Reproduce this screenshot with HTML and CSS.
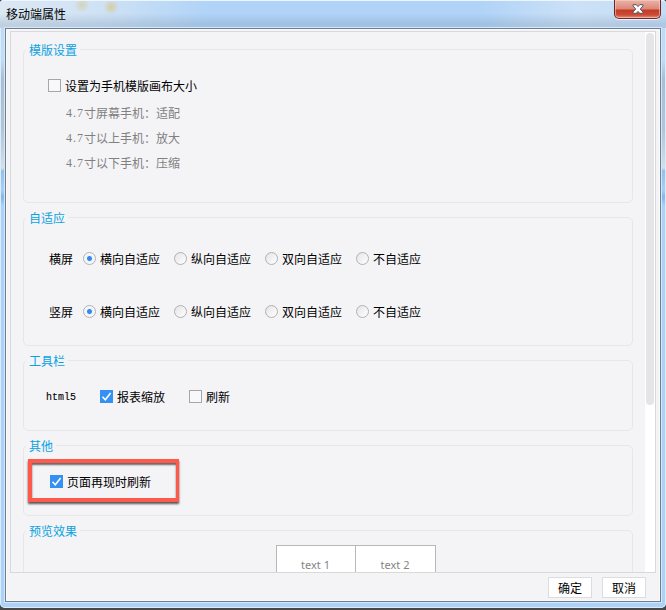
FILE: index.html
```html
<!DOCTYPE html>
<html lang="zh-CN">
<head>
<meta charset="utf-8">
<title>移动端属性</title>
<link rel="stylesheet" href="styles.css">
</head>
<body>
<div class="window">
  <header class="titlebar">
    <h1>移动端属性</h1>
    <button class="close" aria-label="关闭">
      <svg width="12" height="10" viewBox="0 0 12 10"><path d="M1 .7h3.3L6 2.6 7.7.7H11v1.2L8.3 5 11 8.1v1.2H7.7L6 7.4 4.300 9.300H1V8.100L3.700 5 1 1.900z" fill="#fff" stroke="#595465" stroke-width="1"/></svg>
    </button>
  </header>
  <main class="dialog">
    <div class="panel">
      <div class="content">
        <section class="group template">
          <h2>模版设置</h2>
          <label class="option"><i class="box"></i>设置为手机模版画布大小</label>
          <ul class="notes">
            <li><span>4.7</span>寸屏幕手机：适配</li>
            <li><span>4.7</span>寸以上手机：放大</li>
            <li><span>4.7</span>寸以下手机：压缩</li>
          </ul>
        </section>
        <section class="group adapt">
          <h2>自适应</h2>
          <div class="radios">
            <span class="name">横屏</span>
            <label><i class="radio on"></i>横向自适应</label>
            <label><i class="radio"></i>纵向自适应</label>
            <label><i class="radio"></i>双向自适应</label>
            <label><i class="radio"></i>不自适应</label>
          </div>
          <div class="radios">
            <span class="name">竖屏</span>
            <label><i class="radio on"></i>横向自适应</label>
            <label><i class="radio"></i>纵向自适应</label>
            <label><i class="radio"></i>双向自适应</label>
            <label><i class="radio"></i>不自适应</label>
          </div>
        </section>
        <section class="group tools">
          <h2>工具栏</h2>
          <div class="toolrow">
            <span class="html5">html5</span>
            <label class="option zoomable"><i class="box on"><svg width="13" height="13" viewBox="0 0 13 13"><path d="M2.500 6.800 5.300 9.700 10.600 2.900" fill="none" stroke="#fff" stroke-width="1.600"/></svg></i>报表缩放</label>
            <label class="option"><i class="box"></i>刷新</label>
          </div>
        </section>
        <section class="group other">
          <h2>其他</h2>
          <div class="highlight">
            <label class="option"><i class="box on"><svg width="13" height="13" viewBox="0 0 13 13"><path d="M2.500 6.800 5.300 9.700 10.600 2.900" fill="none" stroke="#fff" stroke-width="1.600"/></svg></i>页面再现时刷新</label>
          </div>
        </section>
        <section class="group preview">
          <h2>预览效果</h2>
          <div class="cells"><span>text 1</span><span>text 2</span></div>
        </section>
      </div>
      <div class="track"><div class="thumb"></div></div>
    </div>
    <footer>
      <button class="action">确定</button>
      <button class="action">取消</button>
    </footer>
  </main>
</div>
</body>
</html>
```
FILE: styles.css
```css
* { box-sizing: border-box; }
body {
  margin: 0;
  width: 666px;
  height: 610px;
  overflow: hidden;
  background: #484848;
  color: #000;
  font: 12px/16px "Noto Sans CJK SC", sans-serif;
}
h1, h2, ul { margin: 0; padding: 0; font-size: 12px; font-weight: 400; }
ul { list-style: none; }
i { font-style: normal; flex: none; }
button { font: inherit; padding: 0; }

.window {
  height: 608px;
  padding: 0 5px;
  border-radius: 4px 4px 5px 5px;
  background: linear-gradient(#bed9f1 0, #c1ddf8 60px, #a9bfd3 78px, #b3c5d5 130px, #d5dfe8 168px, #91c0ed 171px, #a8cff5 190px, #83b6e7 197px, #acd2f8 206px, #acd2f8 100%);
  box-shadow: inset 0 0 0 1px #d9ebfc;
}
.titlebar {
  display: flex;
  justify-content: space-between;
  height: 28px;
  margin: 0 -5px;
  padding: 0 5px 0 6px;
  border-top: 1px solid #edf6ff;
  border-radius: 4px 4px 0 0;
  background:
    radial-gradient(circle at 82px 4px, rgba(211, 200, 140, .6) 0, transparent 8px),
    radial-gradient(circle at 111px 6px, rgba(218, 198, 135, .75) 0, transparent 8px),
    linear-gradient(transparent 45%, rgba(120, 145, 170, .27) 85%),
    linear-gradient(90deg, #dce8f3 0, #cfe2f5 100px, #b0d3f7 210px, #b0d3f7 480px, #cce1f7 575px, #c4dcf5 100%);
}
h1 { line-height: 25px; }
.close {
  width: 47px;
  height: 19px;
  margin-top: -1px;
  border: 1px solid #6c2923;
  border-top: 0;
  border-radius: 0 0 5px 5px;
  background: linear-gradient(#eab4a9 0, #dc8778 9px, #c43b25 10px, #cb4b35 15px, #e69883 100%);
  box-shadow: inset 0 0 0 1px rgba(255, 210, 200, .55), 0 1px 0 #eaf4ff;
  display: flex;
  justify-content: center;
  padding-top: 4px;
}
.dialog {
  height: 574px;
  border: 1px solid #6d7e90;
  background: #f4f4f7;
  padding: 2px 4px 0;
  box-shadow: inset 0 0 0 1px #fafafc, 0 0 0 1px #d5e8fb;
}
.panel {
  display: flex;
  height: 542px;
  border: 1px solid #d9d9dc;
  overflow: hidden;
}
.content { flex: 1; padding: 17px 12px 0; overflow: hidden; }
.track { width: 10px; background: #fff; padding: 1px 1px 0; }
.thumb { width: 8px; height: 372px; border-radius: 4px; background: #e5e5e6; }

.group {
  width: 610px;
  border: 1px solid #e7e7e9;
  border-radius: 5px;
  margin-bottom: 15px;
}
h2 {
  display: table;
  margin: -8px 0 0 2px;
  padding: 0 3px;
  background: #f4f4f7;
  color: #0ba2df;
}
.template { height: 154px; margin-bottom: 14px; }
.adapt { height: 129px; margin-bottom: 14px; }
.tools, .other { height: 71px; margin-bottom: 14px; }
.preview { height: 160px; }

.option { display: flex; align-items: center; gap: 4px; white-space: nowrap; }
.box { width: 13px; height: 13px; margin-bottom: 2px; border: 1px solid #a6a6a8; background: #f8f8fa; }
.box.on { border: 0; background: #3490f3; }
.box svg { display: block; }
.template .option { margin: 20px 0 0 24px; }
.notes { margin: 6px 0 0 42px; color: #808080; }
.notes li { display: flex; align-items: center; height: 25px; line-height: 16px; }
.notes span { width: 18px; font-family: "Liberation Serif", serif; font-size: 12px; letter-spacing: 1px; }

.radios { display: flex; align-items: center; height: 16px; margin: 25px 0 0 25px; }
.radios + .radios { margin-top: 37px; }
.radios .name { width: 34px; }
.radios label { display: flex; align-items: center; gap: 4px; width: 91px; white-space: nowrap; }
.radio {
  width: 13px;
  height: 13px;
  margin-bottom: 2px;
  border: 1px solid #b1b1b1;
  border-radius: 50%;
  background: linear-gradient(135deg, #e4e4e4, #fff);
}
.radio.on { background: radial-gradient(circle, #3688ee 0 2px, #eef3f9 3px, #fafafa 6px); }

.toolrow { display: flex; align-items: center; height: 16px; margin: 20px 0 0 22px; }
.html5 { width: 54px; padding-top: 2px; font-family: "Liberation Mono", monospace; font-size: 10px; -webkit-text-stroke: .1px #000; }
.zoomable { width: 89px; }

.highlight {
  width: 151px;
  height: 43px;
  margin: 5px 0 0 4px;
  padding: 11px 0 0 18px;
  border: 4px solid #ff594b;
  border-right-width: 3px;
  box-shadow: 0 2px 2px #555, inset 0 2px 2px #666;
}
.cells {
  display: grid;
  grid-template-columns: 78px 79px;
  gap: 1px;
  width: 160px;
  height: 100px;
  margin: 6px 0 0 252px;
  border: 1px solid #b8b8b8;
  background: #b8b8b8;
}
.cells span {
  background: #fff;
  color: #858585;
  font: 11px/16px "Noto Sans", sans-serif;
  text-align: center;
  padding: 11px 1px 0 0;
}
footer { display: flex; justify-content: flex-end; gap: 10px; padding: 4px 10px 0 0; }
.action { width: 44px; height: 21px; border: 1px solid #dcdce0; background: #fff; color: #000; line-height: 19px; }
```
